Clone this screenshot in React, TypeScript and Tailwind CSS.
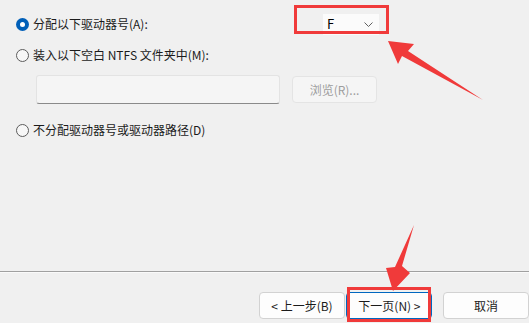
import * as React from "react";

const font = { fontFamily: '"Noto Sans CJK SC", "Noto Sans", sans-serif' };

function Radio({ checked }: { checked?: boolean }) {
    if (checked) {
        return (
            <span className="flex h-[13px] w-[13px] shrink-0 items-center justify-center rounded-full bg-[#005fb8]">
                <span className="h-[5px] w-[5px] rounded-full bg-white" />
            </span>
        );
    }
    return <span className="h-[13px] w-[13px] shrink-0 rounded-full border border-[#5c5c5c] bg-[#f7f7f7]" />;
}

function Button({ children, primary }: { children: React.ReactNode; primary?: boolean }) {
    return (
        <button
            className={`flex h-[27px] w-[86px] shrink-0 items-center justify-center rounded-[4px] border text-[12px] leading-none text-[#1b1b1b] ${
                primary ? "border-[#0067c0] bg-[#fdfdfd]" : "border-[#d2d2d2] bg-[#fdfdfd]"
            }`}
        >
            {children}
        </button>
    );
}

export default function App() {
    return (
        <div className="relative h-[323px] w-[529px] overflow-hidden bg-[#f0f0f0] text-[12px] text-[#1b1b1b]" style={font}>
            <div className="h-[271px] pt-[12px]">
                {/* drive letter row */}
                <div className="flex h-[24px] items-center pl-[16px]">
                    <div className="flex w-[307px] items-center gap-[4px]">
                        <Radio checked />
                        <span>分配以下驱动器号(A):</span>
                    </div>
                    <div className="flex h-[21px] w-[56px] items-center justify-between bg-[#fbfbfb] pl-[4px] pr-[6px] text-[13px] text-black">
                        <span>F</span>
                        <svg width="9" height="5" viewBox="0 0 9 5" fill="none">
                            <path d="M0.5 0.5 L4.5 4.5 L8.5 0.5" stroke="#606060" strokeWidth="1" />
                        </svg>
                    </div>
                </div>

                {/* mount in folder row */}
                <div className="mt-[7px] flex h-[24px] items-center gap-[4px] pl-[16px]">
                    <Radio />
                    <span>装入以下空白 NTFS 文件夹中(M):</span>
                </div>

                <div className="mt-[8px] flex items-center gap-[12px] pl-[36px]">
                    <div className="h-[29px] w-[244px] rounded-[3px] border border-[#e3e3e3] border-b-[#8a8a8a] bg-[#f5f5f5]" />
                    <div className="flex h-[27px] w-[85px] items-center justify-center rounded-[4px] border border-[#e4e4e4] bg-[#f5f5f5] text-[#9d9d9d]">
                        浏览(R)...
                    </div>
                </div>

                <div className="mt-[14px] flex h-[24px] items-center gap-[4px] pl-[16px]">
                    <Radio />
                    <span>不分配驱动器号或驱动器路径(D)</span>
                </div>
            </div>

            <div className="h-px bg-[#a0a0a0]" />
            <div className="h-px bg-[#fafafa]" />

            <div className="mt-[19px] flex pl-[259px]">
                <Button>&lt; 上一步(B)</Button>
                <div className="w-[2px]" />
                <Button primary>下一页(N) &gt;</Button>
                <div className="w-[15px]" />
                <Button>取消</Button>
            </div>

            {/* annotations */}
            <svg className="pointer-events-none absolute inset-0" width="529" height="323" viewBox="0 0 529 323">
                <rect x="295.5" y="6.5" width="92" height="26" fill="none" stroke="#f03a3a" strokeWidth="3" />
                <rect x="348.5" y="288.5" width="81" height="32" fill="none" stroke="#f03a3a" strokeWidth="3" />
                <polygon points="388,41 414,44 408,51 483,100 402,56 398,64" fill="#f03a3a" />
                <polygon points="414,225 402,266 410,273 393,291 386,268 395,267" fill="#f03a3a" />
            </svg>
        </div>
    );
}
